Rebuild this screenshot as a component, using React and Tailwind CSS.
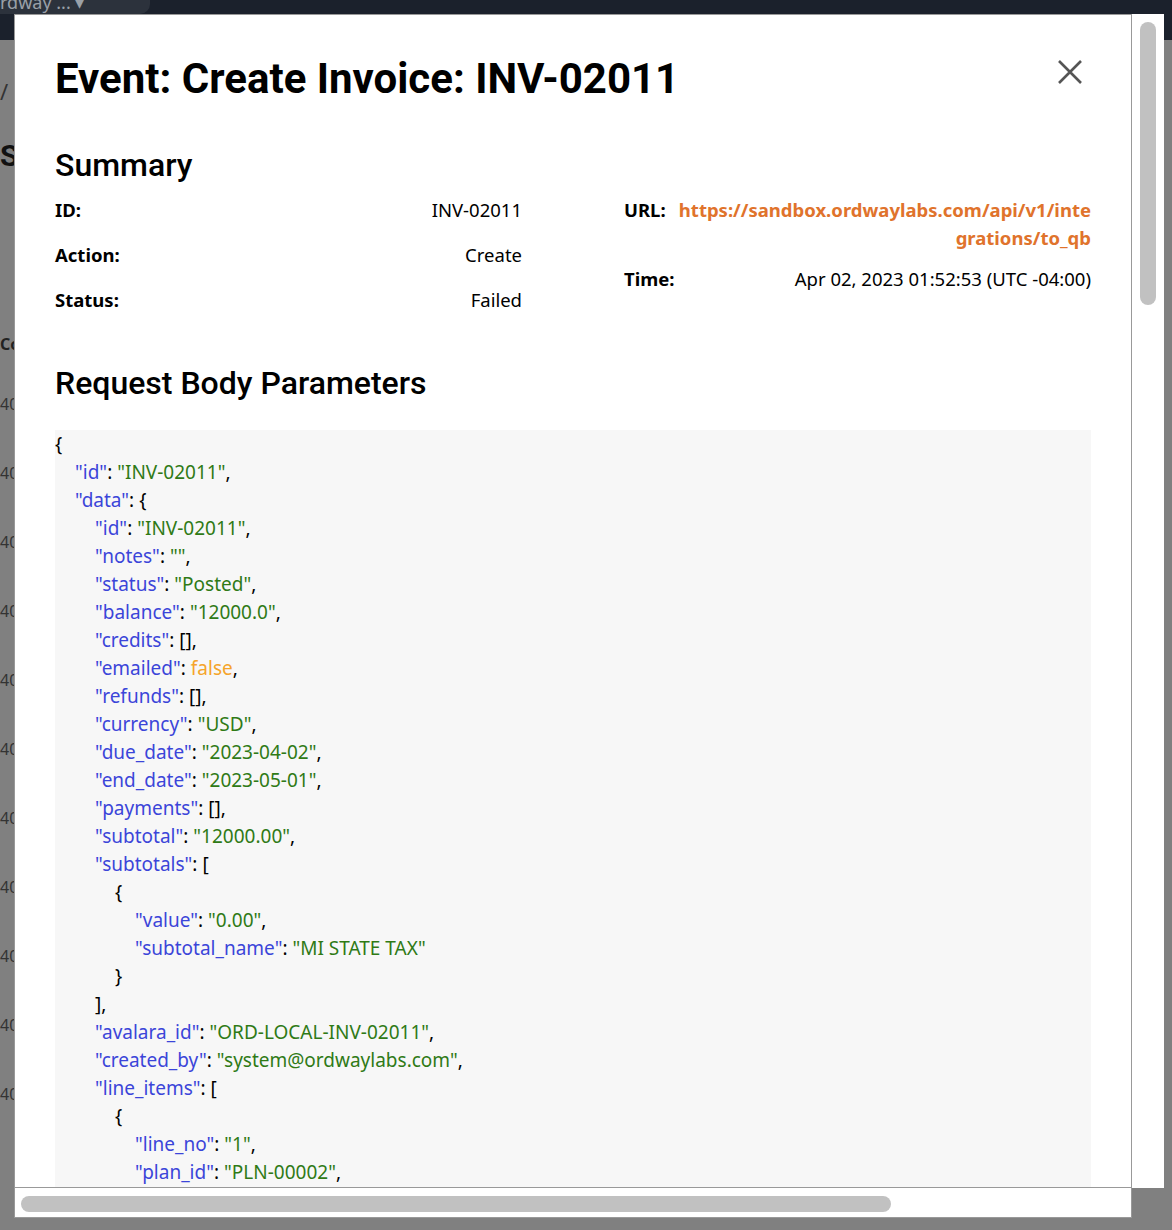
import React from "react";

const K = ({ children }) => <span className="text-[#3b45d9]">"{children}"</span>;
const S = ({ children }) => <span className="text-[#2f7a16]">"{children}"</span>;

const lines = [
  [0, <>{"{"}</>],
  [1, <><K>id</K>: <S>INV-02011</S>,</>],
  [1, <><K>data</K>: {"{"}</>],
  [2, <><K>id</K>: <S>INV-02011</S>,</>],
  [2, <><K>notes</K>: <S></S>,</>],
  [2, <><K>status</K>: <S>Posted</S>,</>],
  [2, <><K>balance</K>: <S>12000.0</S>,</>],
  [2, <><K>credits</K>: [],</>],
  [2, <><K>emailed</K>: <span className="text-[#f5a42a]">false</span>,</>],
  [2, <><K>refunds</K>: [],</>],
  [2, <><K>currency</K>: <S>USD</S>,</>],
  [2, <><K>due_date</K>: <S>2023-04-02</S>,</>],
  [2, <><K>end_date</K>: <S>2023-05-01</S>,</>],
  [2, <><K>payments</K>: [],</>],
  [2, <><K>subtotal</K>: <S>12000.00</S>,</>],
  [2, <><K>subtotals</K>: [</>],
  [3, <>{"{"}</>],
  [4, <><K>value</K>: <S>0.00</S>,</>],
  [4, <><K>subtotal_name</K>: <S>MI STATE TAX</S></>],
  [3, <>{"}"}</>],
  [2, <>],</>],
  [2, <><K>avalara_id</K>: <S>ORD-LOCAL-INV-02011</S>,</>],
  [2, <><K>created_by</K>: <S>system@ordwaylabs.com</S>,</>],
  [2, <><K>line_items</K>: [</>],
  [3, <>{"{"}</>],
  [4, <><K>line_no</K>: <S>1</S>,</>],
  [4, <><K>plan_id</K>: <S>PLN-00002</S>,</>],
  [4, <><K>product_id</K>: <S>P-00001</S>,</>],
];

const pad = ["pl-0", "pl-[20px]", "pl-[40px]", "pl-[60px]", "pl-[80px]"];

export default function App() {
  const noto = { fontFamily: '"Noto Sans", sans-serif' };
  return (
    <div className="relative w-[1172px] h-[1230px] bg-[#808080] overflow-hidden" style={noto}>
      <div className="h-[40px] bg-[#1b212c] flex items-end">
        <div className="w-[150px] h-[14px] bg-[#2c323c] rounded-br-[10px] text-[#9aa0a8] text-[18px] leading-[4px] self-start overflow-hidden">rdway ... ▾</div>
      </div>
      <div className="absolute left-0 top-[75px] text-[#333] text-[22px]">/</div>
      <div className="absolute left-0 top-[133px] text-[#111] text-[30px] font-bold" style={{ fontFamily: "Roboto, sans-serif" }}>S</div>
      <div className="absolute left-0 top-[332px] text-[#222] text-[16px] font-bold">Co</div>
      {[0,1,2,3,4,5,6,7,8,9,10].map(i => (
        <div key={i} className="absolute left-0 text-[#333] text-[16px]" style={{ top: 392 + i * 69 }}>40</div>
      ))}
      <div className="absolute left-[14px] top-[14px] w-[1150px] h-[1204px] flex">
        <div className="flex flex-col w-[1118px]">
          <div className="h-[1174px] bg-white border border-[#999] overflow-hidden pl-[40px] pr-[40px] pt-[38px]">
            <div className="flex justify-between items-start">
              <h1 className="text-[42px] font-bold text-black leading-[52px]" style={{ fontFamily: "Roboto, sans-serif" }}>Event: Create Invoice: INV-02011</h1>
              <svg width="26" height="26" viewBox="0 0 26 26" className="mt-[6px] mr-[8px]"><path d="M2 2L24 24M24 2L2 24" stroke="#555" strokeWidth="2.6" /></svg>
            </div>
            <h2 className="mt-[40px] text-[32px] font-medium text-black leading-[40px]" style={{ fontFamily: "Roboto, sans-serif" }}>Summary</h2>
            <div className="mt-[11px] flex text-[18.5px] text-black">
              <div className="w-[467px] flex flex-col gap-[17px]">
                <div className="flex justify-between leading-[28px]"><span className="font-bold">ID:</span><span>INV-02011</span></div>
                <div className="flex justify-between leading-[28px]"><span className="font-bold">Action:</span><span>Create</span></div>
                <div className="flex justify-between leading-[28px]"><span className="font-bold">Status:</span><span>Failed</span></div>
              </div>
              <div className="ml-[102px] w-[467px] flex flex-col gap-[13px]">
                <div className="flex justify-between leading-[28px]"><span className="font-bold">URL:</span><span className="font-bold text-[#e0732c] text-right w-[418px] break-all">https://sandbox.ordwaylabs.com/api/v1/integrations/to_qb</span></div>
                <div className="flex justify-between leading-[28px]"><span className="font-bold">Time:</span><span>Apr 02, 2023 01:52:53 (UTC -04:00)</span></div>
              </div>
            </div>
            <h2 className="mt-[49px] text-[32px] font-medium text-black leading-[40px]" style={{ fontFamily: "Roboto, sans-serif" }}>Request Body Parameters</h2>
            <div className="mt-[27px] bg-[#f7f7f7] text-[19px] leading-[28px] text-black h-[800px]">
              {lines.map(([l, c], i) => <div key={i} className={pad[l]}>{c}</div>)}
            </div>
          </div>
          <div className="h-[30px] bg-white border-x border-b border-[#999] pt-[8px] pl-[6px]">
            <div className="w-[870px] h-[16px] rounded-full bg-[#c1c1c1]"></div>
          </div>
        </div>
        <div className="w-[32px] h-[1174px] bg-white pt-[8px] pl-[8px]">
          <div className="w-[16px] h-[283px] rounded-full bg-[#c1c1c1]"></div>
        </div>
      </div>
    </div>
  );
}
